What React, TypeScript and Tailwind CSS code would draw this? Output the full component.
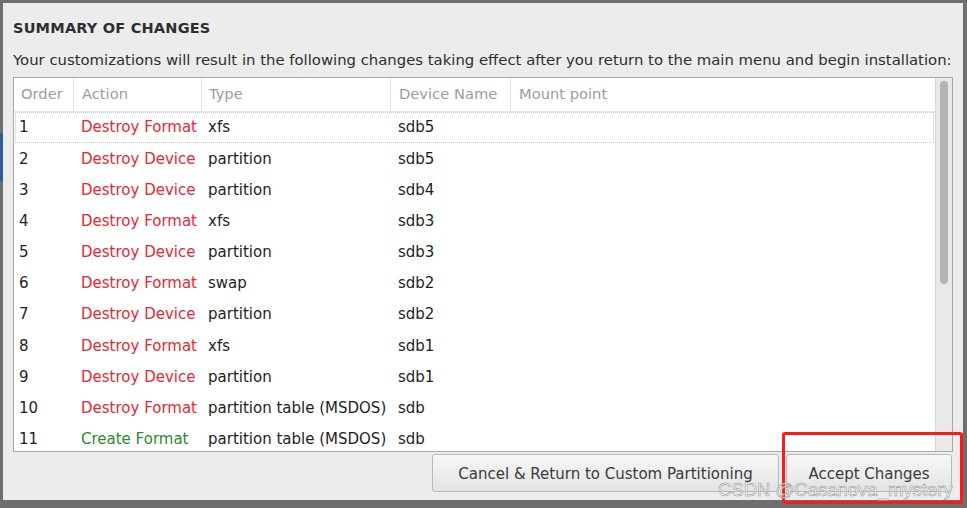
import React from "react";

type Row = { order: number; action: string; create?: boolean; type: string; device: string };

const rows: Row[] = [
  { order: 1, action: "Destroy Format", type: "xfs", device: "sdb5" },
  { order: 2, action: "Destroy Device", type: "partition", device: "sdb5" },
  { order: 3, action: "Destroy Device", type: "partition", device: "sdb4" },
  { order: 4, action: "Destroy Format", type: "xfs", device: "sdb3" },
  { order: 5, action: "Destroy Device", type: "partition", device: "sdb3" },
  { order: 6, action: "Destroy Format", type: "swap", device: "sdb2" },
  { order: 7, action: "Destroy Device", type: "partition", device: "sdb2" },
  { order: 8, action: "Destroy Format", type: "xfs", device: "sdb1" },
  { order: 9, action: "Destroy Device", type: "partition", device: "sdb1" },
  { order: 10, action: "Destroy Format", type: "partition table (MSDOS)", device: "sdb" },
  { order: 11, action: "Create Format", create: true, type: "partition table (MSDOS)", device: "sdb" },
];

export default function App() {
  return (
    <div
      className="relative w-[967px] h-[508px] bg-[#6e6e6e] overflow-hidden flex"
      style={{ fontFamily: '"DejaVu Sans", sans-serif' }}
    >
      {/* left strip of the window behind */}
      <div className="w-[3px] flex flex-col">
        <div className="h-[133px]" />
        <div className="h-[48px] bg-[#2c5d96]" />
      </div>

      {/* dialog */}
      <div className="mt-[3px] w-[960px] h-[497px] bg-[#ececec] flex flex-col px-[10px]">
        <h1 className="mt-[16px] h-[18px] leading-[18px] text-[14.5px] font-bold text-[#2e2e2e] tracking-[0.2px]">
          SUMMARY OF CHANGES
        </h1>
        <p className="mt-[13px] h-[20px] leading-[20px] text-[14.85px] text-[#2e2e2e] whitespace-nowrap">
          Your customizations will result in the following changes taking effect after you return to the main menu and begin installation:
        </p>

        {/* table */}
        <div className="mt-[7px] w-[940px] h-[375px] border border-[#a7a7a7] bg-white flex overflow-hidden">
          <div className="flex-1 flex flex-col">
            <div className="h-[34px] shrink-0 flex items-stretch text-[14.7px] text-[#9c9c9c] border-b border-[#e6e6e6]">
              <div className="w-[60px] pl-[7px] border-r border-[#e6e6e6] flex items-center">Order</div>
              <div className="w-[128px] pl-[8px] border-r border-[#e6e6e6] flex items-center">Action</div>
              <div className="w-[189px] pl-[7px] border-r border-[#e6e6e6] flex items-center">Type</div>
              <div className="w-[120px] pl-[8px] border-r border-[#e6e6e6] flex items-center">Device Name</div>
              <div className="pl-[8px] flex items-center">Mount point</div>
            </div>
            {rows.map((r, i) => (
              <div
                key={r.order}
                className={
                  i === 0
                    ? "mx-[1px] h-[31.2px] shrink-0 flex items-center text-[15px] text-[#1e1e1e] border border-dotted border-[#c4c4c4]"
                    : "mx-[2px] h-[31.2px] shrink-0 flex items-center text-[15px] text-[#1e1e1e]"
                }
              >
                <div className="w-[65px] pl-[3px]">{r.order}</div>
                <div className={r.create ? "w-[127px] text-[#2e8b2e] whitespace-nowrap" : "w-[127px] text-[#ec2633] whitespace-nowrap"}>{r.action}</div>
                <div className="w-[190px] whitespace-nowrap">{r.type}</div>
                <div>{r.device}</div>
              </div>
            ))}
          </div>
          {/* scrollbar */}
          <div className="w-[17px] shrink-0 bg-[#e9e9e9] border-l border-[#d6d6d6] flex justify-center pt-[3px]">
            <div className="w-[8px] h-[203px] rounded-full bg-[#b3b3b3]" />
          </div>
        </div>

        {/* buttons */}
        <div className="mt-[2px] flex justify-end gap-[7px] pr-[1px]">
          <button className="w-[347px] h-[38px] pt-[3px] rounded-[3px] border border-[#b9b9b9] bg-gradient-to-b from-[#f7f7f7] to-[#e3e3e3] text-[15px] text-[#3a3a3a]">
            Cancel &amp; Return to Custom Partitioning
          </button>
          <button className="w-[166px] h-[38px] pt-[3px] rounded-[3px] border border-[#b9b9b9] bg-gradient-to-b from-[#f7f7f7] to-[#e3e3e3] text-[15px] text-[#3a3a3a]">
            Accept Changes
          </button>
        </div>
      </div>

      {/* annotation box */}
      <div className="absolute left-[782px] top-[432px] w-[181px] h-[72px] border-[3px] border-[#ff1a1a] rounded-[3px]" />
      {/* watermark */}
      <div
        className="absolute left-[718px] top-[476px] text-[18.5px] text-white/80 whitespace-nowrap"
        style={{ fontFamily: '"Liberation Sans", sans-serif', WebkitTextStroke: "0.5px #8a8a8a" }}
      >
        CSDN @Casanova_mystery
      </div>
    </div>
  );
}
